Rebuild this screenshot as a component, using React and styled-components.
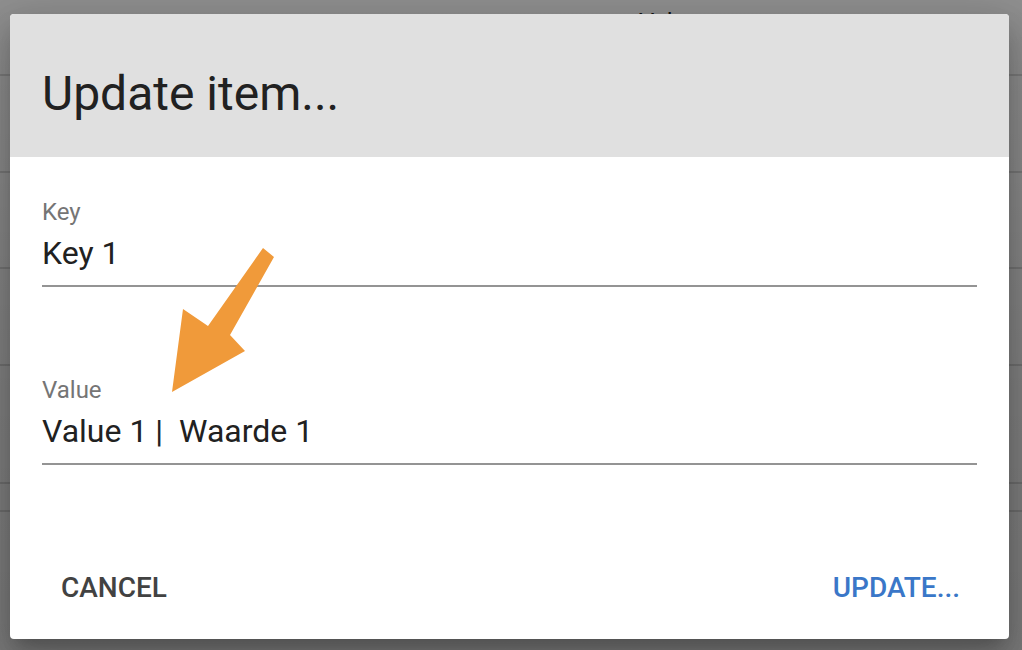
import React from "react";
import styled, { createGlobalStyle } from "styled-components";

const Global = createGlobalStyle`
  html, body { margin: 0; padding: 0; }
  body { font-family: Roboto, "Noto Sans", "Liberation Sans", sans-serif; }
`;

const Page = styled.div`
  position: relative;
  width: 1022px;
  height: 650px;
  overflow: hidden;
  background: #ffffff;
`;

const Table = styled.div`
  display: flex;
  flex-direction: column;
`;

const Row = styled.div`
  display: grid;
  grid-template-columns: 639px 1fr;
  align-items: center;
  border-bottom: 2px solid #dcdcdc;
  font-size: 24px;
  color: #333;
  box-sizing: border-box;
`;

const Cell = styled.div`
  padding-left: 40px;
`;

const HeadCell = styled.div`
  align-self: start;
  padding-top: 8px;
  font-size: 24px;
  color: #222;
`;

const Backdrop = styled.div`
  position: absolute;
  inset: 0;
  background: linear-gradient(180deg, rgba(0,0,0,0.44) 0%, rgba(0,0,0,0.5) 60%, rgba(0,0,0,0.52) 100%);
`;

const Dialog = styled.div`
  position: absolute;
  left: 10px;
  top: 14px;
  width: 999px;
  height: 625px;
  background: #ffffff;
  border-radius: 4px;
  overflow: hidden;
  display: flex;
  flex-direction: column;
  box-shadow: 0 11px 15px -7px rgba(0,0,0,0.2), 0 24px 38px 3px rgba(0,0,0,0.14), 0 9px 46px 8px rgba(0,0,0,0.12);
`;

const Header = styled.div`
  height: 143px;
  box-sizing: border-box;
  background: #e0e0e0;
  padding: 52px 32px 0;
`;

const Title = styled.h2`
  margin: 0;
  font-size: 48px;
  line-height: 56px;
  font-weight: 400;
  color: #212121;
`;

const Body = styled.div`
  flex: 1;
  padding: 41px 32px 0;
  display: flex;
  flex-direction: column;
  gap: 89px;
`;

const Field = styled.div`
  display: flex;
  flex-direction: column;
  gap: 7px;
`;

const Label = styled.label`
  font-size: 24px;
  line-height: 28px;
  color: #757575;
`;

const Input = styled.div`
  font-size: 32px;
  line-height: 40px;
  color: #212121;
  padding-bottom: 12px;
  border-bottom: 2px solid #949494;
  white-space: pre;
`;

const Actions = styled.div`
  display: flex;
  justify-content: space-between;
  align-items: center;
  padding: 0 17px 15px 19px;
`;

const Button = styled.button`
  border: 0;
  background: transparent;
  padding: 18px 32px;
  font-family: Roboto, "Noto Sans", "Liberation Sans", sans-serif;
  font-size: 28px;
  line-height: 36px;
  font-weight: 500;
  text-transform: uppercase;
  color: ${(p) => (p.$primary ? "#3a77c8" : "#424242")};
  cursor: pointer;
`;

const Arrow = styled.svg`
  position: absolute;
  left: 0;
  top: 0;
  pointer-events: none;
`;

const rows = [
  { h: 76, v: "Value", head: true },
  { h: 97, v: "" },
  { h: 96, v: "" },
  { h: 97, v: "" },
  { h: 118, v: "" },
  { h: 28, v: "" },
];

export default function App() {
  return (
    <>
      <Global />
      <Page>
        <Table>
          {rows.map((r, i) => (
            <Row key={i} style={{ height: r.h }}>
              <Cell />
              {r.head ? <HeadCell>{r.v}</HeadCell> : <Cell>{r.v}</Cell>}
            </Row>
          ))}
        </Table>
        <Backdrop />
        <Dialog>
          <Header>
            <Title>Update item...</Title>
          </Header>
          <Body>
            <Field>
              <Label>Key</Label>
              <Input>Key 1</Input>
            </Field>
            <Field>
              <Label>Value</Label>
              <Input>{"Value 1 |  Waarde 1"}</Input>
            </Field>
          </Body>
          <Actions>
            <Button>Cancel</Button>
            <Button $primary>Update...</Button>
          </Actions>
        </Dialog>
        <Arrow width="1022" height="650" viewBox="0 0 1022 650">
          <polygon
            fill="#f09a3a"
            points="263,248 274,257 230,335 245,351 172,392 183,309 208,326"
          />
        </Arrow>
      </Page>
    </>
  );
}
